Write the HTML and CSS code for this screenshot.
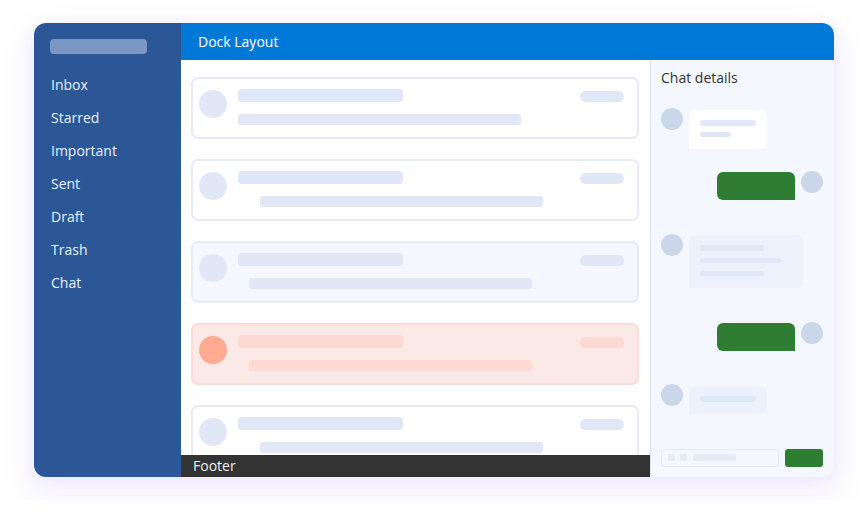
FILE: index.html
```html
<!DOCTYPE html>
<html>
<head>
<meta charset="utf-8">
<link rel="stylesheet" href="styles.css">
</head>
<body>
<div class="stage">
  <div class="app">
    <aside class="sidebar">
      <div class="brand"></div>
      <nav class="nav">
        <div class="nav-item">Inbox</div>
        <div class="nav-item">Starred</div>
        <div class="nav-item">Important</div>
        <div class="nav-item">Sent</div>
        <div class="nav-item">Draft</div>
        <div class="nav-item">Trash</div>
        <div class="nav-item">Chat</div>
      </nav>
    </aside>
    <div class="right">
      <header class="header">Dock Layout</header>
      <div class="body">
        <section class="main">
          <div class="list">
            <div class="card">
              <div class="avatar"></div>
              <div class="content">
                <div class="row1"><div class="bar1"></div><div class="pill"></div></div>
                <div class="bar2"></div>
              </div>
            </div>
            <div class="card">
              <div class="avatar"></div>
              <div class="content">
                <div class="row1"><div class="bar1"></div><div class="pill"></div></div>
                <div class="bar2 indent-lg"></div>
              </div>
            </div>
            <div class="card card-soft">
              <div class="avatar"></div>
              <div class="content">
                <div class="row1"><div class="bar1"></div><div class="pill"></div></div>
                <div class="bar2 indent-sm"></div>
              </div>
            </div>
            <div class="card card-alert">
              <div class="avatar"></div>
              <div class="content">
                <div class="row1"><div class="bar1"></div><div class="pill"></div></div>
                <div class="bar2 indent-sm"></div>
              </div>
            </div>
            <div class="card">
              <div class="avatar"></div>
              <div class="content">
                <div class="row1"><div class="bar1"></div><div class="pill"></div></div>
                <div class="bar2 indent-lg"></div>
              </div>
            </div>
          </div>
          <footer class="footer">Footer</footer>
        </section>
        <section class="chat">
          <div class="chat-title">Chat details</div>
          <div class="msg in m1">
            <div class="c-avatar"></div>
            <div class="bubble b-white">
              <div class="line w56 h6"></div>
              <div class="line w31 h5 gap6"></div>
            </div>
          </div>
          <div class="msg out m2">
            <div class="bubble b-green"></div>
            <div class="c-avatar"></div>
          </div>
          <div class="msg in m3">
            <div class="c-avatar"></div>
            <div class="bubble b-soft big">
              <div class="line w64 h6"></div>
              <div class="line w81 h5 gap7"></div>
              <div class="line w64 h5 gap8"></div>
            </div>
          </div>
          <div class="msg out m4">
            <div class="bubble b-green"></div>
            <div class="c-avatar"></div>
          </div>
          <div class="msg in m5">
            <div class="c-avatar"></div>
            <div class="bubble b-soft small">
              <div class="line w56 h6"></div>
            </div>
          </div>
          <div class="composer">
            <div class="input">
              <div class="sq"></div>
              <div class="sq"></div>
              <div class="ibar"></div>
            </div>
            <div class="send"></div>
          </div>
        </section>
      </div>
    </div>
  </div>
</div>
</body>
</html>
```
FILE: styles.css
```css
* { box-sizing: border-box; }
html, body { margin: 0; padding: 0; background: #ffffff; }
body {
  font-family: "Open Sans", "Noto Sans", sans-serif;
  font-size: 14px;
}
.stage {
  padding: 23px 34px;
}
.app {
  width: 800px;
  height: 454px;
  display: flex;
  border-radius: 12px;
  overflow: hidden;
  box-shadow: 0 12px 28px 8px rgba(128, 100, 240, 0.09), 0 2px 12px 2px rgba(128, 100, 240, 0.06);
}
.sidebar {
  width: 147px;
  flex: none;
  background: #2b5797;
  padding: 16px 0 0 16px;
}
.brand {
  width: 97px;
  height: 15px;
  border-radius: 4px;
  background: #7b96c2;
}
.nav {
  margin-top: 14px;
}
.nav-item {
  height: 33px;
  line-height: 33px;
  padding-left: 1px;
  color: #eaf0f9;
  font-size: 14px;
}
.right {
  flex: 1;
  display: flex;
  flex-direction: column;
  min-width: 0;
}
.header {
  height: 37px;
  flex: none;
  background: #0078d7;
  color: #ffffff;
  line-height: 37px;
  padding-left: 17px;
  font-size: 14px;
}
.body {
  flex: 1;
  display: flex;
  min-height: 0;
}
.main {
  width: 469px;
  flex: none;
  display: flex;
  flex-direction: column;
  background: #ffffff;
}
.list {
  flex: 1;
  overflow: hidden;
  padding: 17px 11px 0 10px;
  display: flex;
  flex-direction: column;
  gap: 20px;
}
.card {
  flex: none;
  height: 62px;
  border: 2px solid #e7ebf9;
  border-radius: 7px;
  background: #ffffff;
  display: flex;
  padding: 0 13px 0 6px;
}
.card-soft {
  background: #f4f7fe;
}
.card-alert {
  background: #fbe9e7;
  border-color: #fcdcd6;
}
.avatar {
  width: 28px;
  height: 28px;
  border-radius: 50%;
  background: #e2e7f7;
  margin-top: 11px;
  margin-right: 11px;
  flex: none;
}
.card-alert .avatar { background: #ffab91; }
.content {
  flex: 1;
  padding-top: 10px;
}
.row1 {
  display: flex;
  justify-content: space-between;
  align-items: flex-start;
}
.bar1 {
  width: 165px;
  height: 13px;
  border-radius: 4px;
  background: #e2e7f7;
}
.pill {
  width: 44px;
  height: 11px;
  margin-top: 2px;
  border-radius: 6px;
  background: #e2e7f7;
}
.bar2 {
  width: 283px;
  height: 11px;
  margin-top: 12px;
  border-radius: 3px;
  background: #e2e7f7;
}
.bar2.indent-lg { margin-left: 22px; }
.bar2.indent-sm { margin-left: 11px; }
.card-alert .bar1,
.card-alert .pill,
.card-alert .bar2 { background: #fdd9d3; }
.footer {
  height: 22px;
  flex: none;
  background: #333333;
  color: #eeeeee;
  line-height: 22px;
  padding-left: 12px;
  font-size: 14px;
}
.chat {
  flex: 1;
  background: #f5f7ff;
  border-left: 1px solid #dbe3f5;
  padding: 0 11px 0 10px;
  display: flex;
  flex-direction: column;
}
.chat-title {
  margin-top: 8px;
  height: 20px;
  line-height: 20px;
  color: #333333;
  font-size: 14px;
}
.msg {
  display: flex;
  align-items: flex-start;
  gap: 6px;
}
.msg.out { justify-content: flex-end; }
.m1 { margin-top: 20px; }
.m2 { margin-top: 22px; }
.m3 { margin-top: 34px; }
.m4 { margin-top: 34px; }
.m5 { margin-top: 33px; }
.c-avatar {
  width: 22px;
  height: 22px;
  border-radius: 50%;
  background: #c9d7e8;
  flex: none;
}
.bubble {
  flex: none;
}
.msg.in .bubble {
  border-radius: 6px 6px 6px 0;
  padding: 10px 11px;
  margin-top: 2px;
}
.msg.m3 .bubble { margin-top: 1px; }
.b-white {
  width: 78px;
  height: 39px;
  background: #ffffff;
}
.b-soft { background: #edf1fc; }
.b-soft.big { width: 114px; height: 53px; padding-top: 11px; }
.b-soft.small { width: 78px; height: 28px; padding-top: 11px; }
.b-green {
  width: 78px;
  height: 28px;
  margin-top: 1px;
  background: #2e7d32;
  border-radius: 6px 6px 0 6px;
}
.line {
  background: #e1e7f6;
  border-radius: 3px;
}
.w56 { width: 56px; }
.w31 { width: 31px; }
.w64 { width: 64px; }
.w81 { width: 81px; }
.h6 { height: 6px; }
.h5 { height: 5px; }
.gap6 { margin-top: 6px; }
.gap7 { margin-top: 7px; }
.gap8 { margin-top: 8px; }
.composer {
  margin-top: 35px;
  display: flex;
  gap: 6px;
}
.input {
  width: 118px;
  height: 18px;
  border: 1px solid #e4e9f7;
  border-radius: 3px;
  background: #f5f7ff;
  display: flex;
  align-items: flex-start;
  gap: 5px;
  padding: 4px 6px;
}
.sq {
  width: 7px;
  height: 7px;
  border-radius: 1px;
  background: #e6ebf8;
}
.ibar {
  width: 43px;
  height: 7px;
  border-radius: 1px;
  background: #e6ebf8;
  margin-left: 1px;
}
.send {
  width: 38px;
  height: 18px;
  border-radius: 3px;
  background: #2e7d32;
}
```
